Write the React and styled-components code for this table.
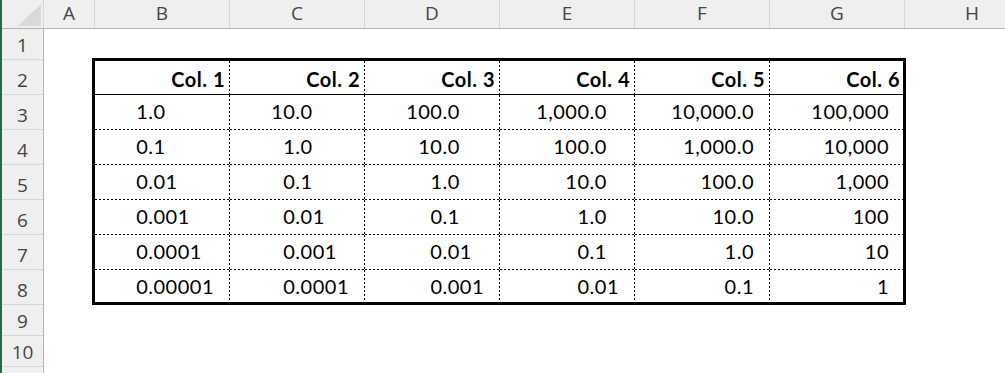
import { styled, createGlobalStyle } from 'styled-components';

const GlobalStyle = createGlobalStyle`
  html, body {
    margin: 0;
    background: #fff;
    overflow: hidden;
  }
`;

const HEADER_BG = '#efefef';
const HEADER_LINE = '#d6d6d6';
const HEADER_EDGE = '#b3b3b3';

const Sheet = styled.div`
  display: grid;
  grid-template-columns: 42px 1fr;
  grid-template-rows: 29px 1fr;
  width: 100vw;
  height: 100vh;
  box-sizing: border-box;
  border-left: 2px solid #1d7044;
  font-family: "Open Sans", "Noto Sans", sans-serif;
  color: #454545;
`;

const Corner = styled.div`
  display: flex;
  align-items: flex-end;
  justify-content: flex-end;
  padding: 0 2px 2px 0;
  background: ${HEADER_BG};
  border-right: 1px solid ${HEADER_LINE};
  border-bottom: 1px solid ${HEADER_EDGE};
`;

const CornerTriangle = styled.div`
  width: 23px;
  height: 22px;
  background: #d9d9d9;
  clip-path: polygon(100% 0, 100% 100%, 0 100%);
`;

const ColumnHeaders = styled.div`
  display: flex;
  overflow: hidden;
  background: ${HEADER_BG};
  border-bottom: 1px solid ${HEADER_EDGE};
`;

const ColumnHeader = styled.div`
  flex: none;
  box-sizing: border-box;
  width: ${({ $width }) => $width}px;
  display: flex;
  align-items: flex-end;
  justify-content: center;
  padding-bottom: 5px;
  border-right: 1px solid ${HEADER_LINE};
  font-size: 19px;
  line-height: 1;
`;

const RowHeaders = styled.div`
  display: flex;
  flex-direction: column;
  overflow: hidden;
  background: ${HEADER_BG};
  border-right: 1px solid ${HEADER_EDGE};
`;

const RowHeader = styled.div`
  flex: none;
  box-sizing: border-box;
  height: ${({ $height }) => $height}px;
  display: flex;
  align-items: flex-end;
  justify-content: center;
  padding-bottom: 4px;
  border-bottom: 1px solid ${HEADER_LINE};
  font-size: 19px;
  line-height: 1;
`;

const Body = styled.div`
  overflow: hidden;
  padding: 29px 0 0 48px;
  background: #fff;
`;

const Table = styled.div`
  display: grid;
  width: max-content;
  grid-template-columns: repeat(5, 135px) 133px;
  grid-template-rows: 34px repeat(5, 35px) 32px;
  border: 3px solid #000;
  font-family: Lato, "Liberation Sans", sans-serif;
  font-size: 20px;
  letter-spacing: 0.5px;
  line-height: 1;
  color: #000;
`;

const dottedRight =
  'repeating-linear-gradient(to bottom, #000 0 2px, transparent 2px 4px) right top / 1px 100% no-repeat';
const dottedBottom =
  'repeating-linear-gradient(to right, #000 0 2px, transparent 2px 4px) left bottom / 100% 1px no-repeat';
const solidBottom = 'linear-gradient(#000, #000) left bottom / 100% 1px no-repeat';

const Cell = styled.div`
  display: flex;
  align-items: flex-end;
  justify-content: flex-end;
  white-space: pre;
  font-variant-numeric: tabular-nums;
  background: ${({ $right, $bottom }) =>
    [
      $right && dottedRight,
      $bottom === 'solid' && solidBottom,
      $bottom === 'dotted' && dottedBottom,
      '#fff',
    ]
      .filter(Boolean)
      .join(', ')};
`;

const HeadCell = styled(Cell)`
  font-weight: 700;
  padding: 0 ${({ $right }) => ($right ? 5 : 3)}px 6px 0;
`;

const NumCell = styled(Cell)`
  padding: 0 ${({ $right }) => ($right ? 16 : 14)}px ${({ $bottom }) => ($bottom ? 9 : 6)}px 0;
`;

const Pad = styled.span`
  visibility: hidden;
`;

const columns = [
  { name: 'A', width: 51 },
  { name: 'B', width: 135 },
  { name: 'C', width: 135 },
  { name: 'D', width: 135 },
  { name: 'E', width: 135 },
  { name: 'F', width: 135 },
  { name: 'G', width: 135 },
  { name: 'H', width: 135 },
];

const rowHeights = [31, 35, 35, 35, 35, 35, 35, 35, 31, 31];

const headers = ['Col. 1', 'Col. 2', 'Col. 3', 'Col. 4', 'Col. 5', 'Col. 6'];

const data = [
  ['1.0', '10.0', '100.0', '1,000.0', '10,000.0', '100,000'],
  ['0.1', '1.0', '10.0', '100.0', '1,000.0', '10,000'],
  ['0.01', '0.1', '1.0', '10.0', '100.0', '1,000'],
  ['0.001', '0.01', '0.1', '1.0', '10.0', '100'],
  ['0.0001', '0.001', '0.01', '0.1', '1.0', '10'],
  ['0.00001', '0.0001', '0.001', '0.01', '0.1', '1'],
];

// decimal places of a value, used to line the points up like Excel's "0.0???" format
const decimals = (v) => (v.includes('.') ? v.split('.')[1].length : 0);
const maxDecimals = headers.map((_, c) => Math.max(...data.map((row) => decimals(row[c]))));

export default function App() {
  return (
    <>
      <GlobalStyle />
      <Sheet>
        <Corner>
          <CornerTriangle />
        </Corner>
        <ColumnHeaders>
          {columns.map((col) => (
            <ColumnHeader key={col.name} $width={col.width}>
              {col.name}
            </ColumnHeader>
          ))}
        </ColumnHeaders>
        <RowHeaders>
          {rowHeights.map((h, i) => (
            <RowHeader key={i} $height={h}>
              {i + 1}
            </RowHeader>
          ))}
        </RowHeaders>
        <Body>
          <Table>
            {headers.map((title, c) => (
              <HeadCell key={title} $right={c < headers.length - 1} $bottom="solid">
                {title}
              </HeadCell>
            ))}
            {data.map((row, r) =>
              row.map((value, c) => {
                const pad = maxDecimals[c] - decimals(value);
                return (
                  <NumCell
                    key={`${r}-${c}`}
                    $right={c < row.length - 1}
                    $bottom={r < data.length - 1 ? 'dotted' : undefined}
                  >
                    {value}
                    {pad > 0 && <Pad>{'0'.repeat(pad)}</Pad>}
                  </NumCell>
                );
              })
            )}
          </Table>
        </Body>
      </Sheet>
    </>
  );
}
